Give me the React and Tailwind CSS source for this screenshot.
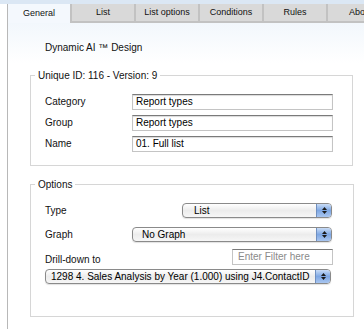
import React from "react";

const tabs = ["List", "List options", "Conditions", "Rules", "About"];

function Field({ label, value }) {
  return (
    <div className="flex items-center h-[15px]">
      <span className="w-[87px]">{label}</span>
      <div className="w-[201px] h-[16px] border border-[#c4c4c4] border-t-[#7a7a7a] bg-white shadow-[inset_0_1px_1px_rgba(0,0,0,0.15)] pl-[3px] leading-[14px] text-black">
        {value}
      </div>
    </div>
  );
}

function AquaSelect({ value, className, pad }) {
  return (
    <div
      className={
        "flex h-[15px] rounded-[4px] border border-[#8a8a8a] overflow-hidden bg-gradient-to-b from-[#ffffff] via-[#ececec] to-[#f6f6f6] shadow-[0_1px_1px_rgba(0,0,0,0.12)] " +
        (className || "")
      }
    >
      <span className={"flex-1 leading-[13px] text-black whitespace-nowrap overflow-hidden " + (pad || "pl-[10px]")}>
        {value}
      </span>
      <div className="w-[15px] shrink-0 border-l border-[#6f8fc0] bg-gradient-to-b from-[#c9dcf6] via-[#7ea7e3] to-[#a9c6f0] flex flex-col items-center justify-center gap-[1px]">
        <svg width="5" height="3" viewBox="0 0 5 3">
          <path d="M2.5 0L5 3H0z" fill="#1a1a1a" />
        </svg>
        <svg width="5" height="3" viewBox="0 0 5 3">
          <path d="M0 0h5L2.5 3z" fill="#1a1a1a" />
        </svg>
      </div>
    </div>
  );
}

export default function App() {
  return (
    <div
      className="w-[364px] h-[329px] bg-white overflow-hidden text-[10px] text-[#111]"
      style={{ fontFamily: '"Liberation Sans", Arial, sans-serif' }}
    >
      <div className="h-[4px] bg-[#dbe7f4]" />
      {/* tab strip */}
      <div className="flex h-[19px] overflow-hidden">
        <div className="w-[7px] shrink-0 bg-white" />
        <div className="w-[63px] shrink-0 border-l border-[#b8b8b8] bg-[#f4f8fd] flex items-center justify-center text-[9px]">
          General
        </div>
        {tabs.map((t, i) => (
          <div
            key={t}
            className={
              "shrink-0 h-[19px] bg-[#d9d9d9] border-l-2 border-b-2 border-[#c2c2c2] flex items-center text-[9px] " +
              (i === 4 ? "w-[60px] justify-start pl-[21px]" : "w-[64px] justify-center")
            }
          >
            {t}
          </div>
        ))}
      </div>

      {/* panel */}
      <div className="ml-[7px] h-[306px] border-l border-[#b8b8b8] bg-gradient-to-b from-[#f2f7fc] to-white to-[40px]">
        <div className="pt-[19px] pl-[37px] leading-[11px]">Dynamic AI ™ Design</div>

        <fieldset className="mt-[17px] ml-[22px] w-[323px] h-[96px] border border-[#d6d6d6] pl-[4px]">
          <legend className="px-[3px] leading-[11px]">Unique ID: 116 - Version: 9</legend>
          <div className="pl-[10px] pt-[13px] flex flex-col gap-[6px]">
            <Field label="Category" value="Report types" />
            <Field label="Group" value="Report types" />
            <Field label="Name" value="01. Full list" />
          </div>
        </fieldset>

        <fieldset className="mt-[13px] ml-[22px] w-[323px] h-[138px] border border-[#d6d6d6] pl-[4px]">
          <legend className="px-[3px] leading-[11px]">Options</legend>
          <div className="pl-[10px] pr-[20px] pt-[13px]">
            <div className="flex items-center">
              <span className="w-[137px]">Type</span>
              <AquaSelect value="List" className="w-[150px]" pad="pl-[11px]" />
            </div>
            <div className="flex items-center mt-[9px]">
              <span className="w-[87px]">Graph</span>
              <AquaSelect value="No Graph" className="w-[200px]" pad="pl-[9px]" />
            </div>
            <div className="flex items-end justify-between mt-[7px] w-[288px]">
              <span className="leading-[11px]">Drill-down to</span>
              <div className="w-[101px] h-[16px] border border-[#c4c4c4] border-t-[#7a7a7a] bg-white pl-[5px] leading-[14px] text-[#8a8a8a]">
                Enter Filter here
              </div>
            </div>
            <AquaSelect
              value="1298 4. Sales Analysis by Year (1.000) using J4.ContactID"
              className="w-[286px] mt-[4px]"
              pad="pl-[5px]"
            />
          </div>
        </fieldset>
      </div>
    </div>
  );
}
